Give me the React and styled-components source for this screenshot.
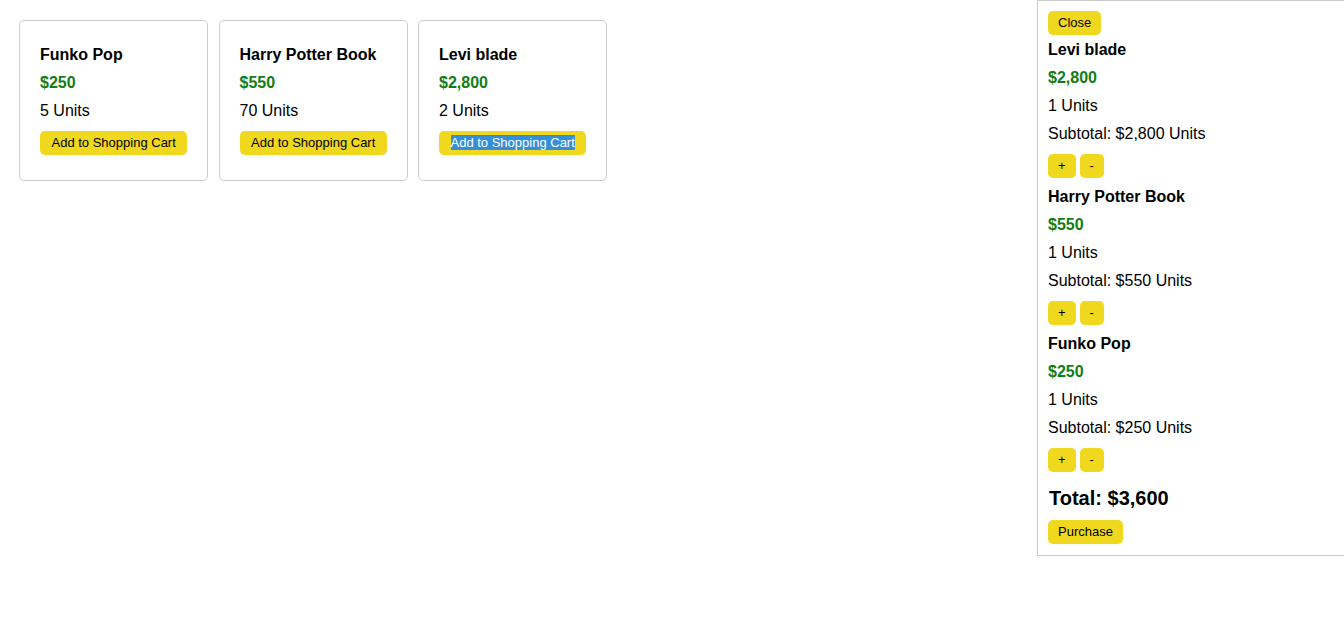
import React from 'react'
import styled, { createGlobalStyle } from 'styled-components'

const GlobalStyle = createGlobalStyle`
    body {
        margin:0;
        font-family:"Liberation Sans", Arial, sans-serif;
        background:#fff;
        color:#000;
    }
`

const Shop = styled.div`
    display:flex;
    gap:10.5px;
    padding:20px 19px;
    align-items:flex-start;
`
const Card = styled.div`
    width:189px;
    box-sizing:border-box;
    border:1px solid #ccc;
    border-radius:5px;
    padding:25px 20px 25px;
    display:flex;
    flex-direction:column;
    align-items:flex-start;
`
const Name = styled.div`
    font-size:16px;
    line-height:18px;
    font-weight:bold;
`
const Price = styled.div`
    font-size:16px;
    line-height:18px;
    font-weight:bold;
    color:#127d12;
    margin-top:10px;
`
const Line = styled.div`
    font-size:16px;
    line-height:18px;
    margin-top:10px;
`
const Button = styled.button`
    font-family:"Liberation Sans", Arial, sans-serif;
    font-size:13px;
    line-height:16px;
    white-space:nowrap;
    color:#000;
    background:#efd81d;
    border:none;
    border-radius:5px;
    padding:4px ${props => props.pad || 10}px;
    margin-top:${props => props.top || 0}px;
    margin-right:${props => props.right || 0}px;
`
const Selected = styled.span`
    background:#338fdb;
    color:#fff;
`
const Cart = styled.div`
    position:fixed;
    top:0;
    right:-19px;
    width:326px;
    box-sizing:border-box;
    border:1px solid #ccc;
    padding:10px 10px 11px;
    background:#fff;
    display:flex;
    flex-direction:column;
    align-items:flex-start;
`
const CartItem = styled.div`
    display:flex;
    flex-direction:column;
    align-items:flex-start;
    margin-top:${props => props.first ? 6 : 10}px;
`
const Controls = styled.div`
    display:flex;
    margin-top:11px;
`
const Total = styled.div`
    font-size:20px;
    line-height:23px;
    font-weight:bold;
    margin-top:15px;
    padding-left:1px;
`

const products = [
    { name: 'Funko Pop', price: '$250', units: 5 },
    { name: 'Harry Potter Book', price: '$550', units: 70 },
    { name: 'Levi blade', price: '$2,800', units: 2, selected: true },
]

const cart = [
    { name: 'Levi blade', price: '$2,800', units: 1 },
    { name: 'Harry Potter Book', price: '$550', units: 1 },
    { name: 'Funko Pop', price: '$250', units: 1 },
]

const App = () => {
  return (
    <>
        <GlobalStyle/>
        <Shop>
            {products.map(p => (
                <Card key={p.name}>
                    <Name>{p.name}</Name>
                    <Price>{p.price}</Price>
                    <Line>{p.units} Units</Line>
                    <Button top={11} pad={11.5}>
                        {p.selected ? <Selected>Add to Shopping Cart</Selected> : 'Add to Shopping Cart'}
                    </Button>
                </Card>
            ))}
        </Shop>
        <Cart>
            <Button>Close</Button>
            {cart.map((item, i) => (
                <CartItem key={item.name} first={i === 0}>
                    <Name>{item.name}</Name>
                    <Price>{item.price}</Price>
                    <Line>{item.units} Units</Line>
                    <Line>Subtotal: {item.price} Units</Line>
                    <Controls>
                        <Button right={4}>+</Button>
                        <Button>-</Button>
                    </Controls>
                </CartItem>
            ))}
            <Total>Total: $3,600</Total>
            <Button top={10}>Purchase</Button>
        </Cart>
    </>
  )
}

export default App
